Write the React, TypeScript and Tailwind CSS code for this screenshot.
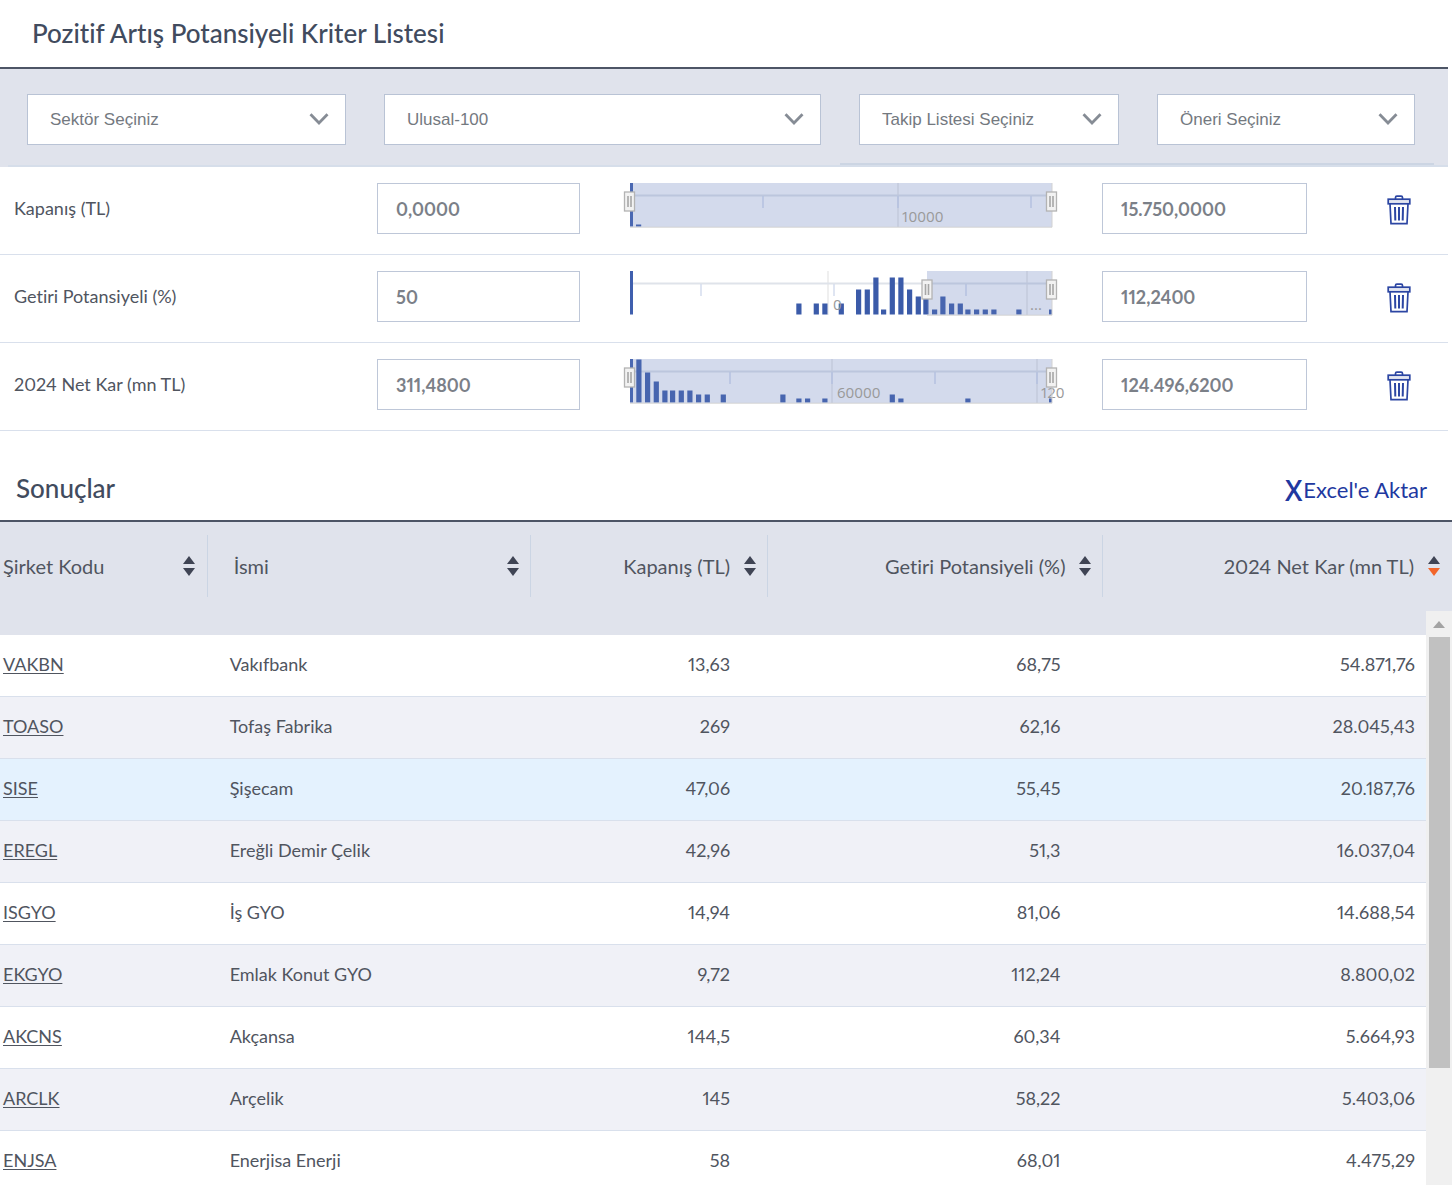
import { useState } from "react"

type Bar = [x: number, height: number]

type Criterion = {
  label: string
  min: string
  max: string
  selectionStart: number
  ticks: number[]
  majors: number[]
  captions: { x: number; text: string }[]
  bars: Bar[]
}

const filters = ["Sektör Seçiniz", "Ulusal-100", "Takip Listesi Seçiniz", "Öneri Seçiniz"]

const criteria: Criterion[] = [
  {
    label: "Kapanış (TL)",
    min: "0,0000",
    max: "15.750,0000",
    selectionStart: 10,
    ticks: [143, 278, 411],
    majors: [278],
    captions: [{ x: 282, text: "10000" }],
    bars: [[16, 2]],
  },
  {
    label: "Getiri Potansiyeli (%)",
    min: "50",
    max: "112,2400",
    selectionStart: 307,
    ticks: [81, 214, 346],
    majors: [208, 407],
    captions: [
      { x: 213, text: "0" },
      { x: 410, text: "..." },
    ],
    bars: [
      [176.3, 11], [193.7, 11], [202.3, 11], [218.7, 11], [236, 25], [244.7, 25], [253.3, 37], [261, 5],
      [269.7, 37], [278.3, 37], [287, 25], [295.7, 18], [303.3, 18], [312, 5], [320.3, 18], [329, 11],
      [337.7, 11], [345.3, 5], [354, 5], [362.7, 5], [371.3, 5], [396.3, 5], [429, 5],
    ],
  },
  {
    label: "2024 Net Kar (mn TL)",
    min: "311,4800",
    max: "124.496,6200",
    selectionStart: 10,
    ticks: [110, 212, 315, 417],
    majors: [212, 417],
    captions: [
      { x: 217, text: "60000" },
      { x: 421, text: "120" },
    ],
    bars: [
      [16.3, 43], [25, 30], [33.7, 21], [42.3, 12], [50, 12], [58.7, 12], [67.3, 12], [76, 8], [84.7, 8],
      [100.7, 8], [160.3, 8], [176.3, 4], [185, 4], [202.3, 4], [269.7, 8], [278.3, 4], [345.3, 4], [429, 4],
    ],
  },
]

const columns = [
  { label: "Şirket Kodu", className: "justify-between border-r pl-[3px] pr-3" },
  { label: "İsmi", className: "justify-between border-r pl-[26px] pr-[11px]" },
  { label: "Kapanış (TL)", className: "justify-end border-r pr-[11px]" },
  { label: "Getiri Potansiyeli (%)", className: "justify-end border-r pr-[11px]" },
  { label: "2024 Net Kar (mn TL)", className: "justify-end pr-3" },
]

const rows = [
  ["VAKBN", "Vakıfbank", "13,63", "68,75", "54.871,76"],
  ["TOASO", "Tofaş Fabrika", "269", "62,16", "28.045,43"],
  ["SISE", "Şişecam", "47,06", "55,45", "20.187,76"],
  ["EREGL", "Ereğli Demir Çelik", "42,96", "51,3", "16.037,04"],
  ["ISGYO", "İş GYO", "14,94", "81,06", "14.688,54"],
  ["EKGYO", "Emlak Konut GYO", "9,72", "112,24", "8.800,02"],
  ["AKCNS", "Akçansa", "144,5", "60,34", "5.664,93"],
  ["ARCLK", "Arçelik", "145", "58,22", "5.403,06"],
  ["ENJSA", "Enerjisa Enerji", "58", "68,01", "4.475,29"],
]

function Handle({ x }: { x: number }) {
  return (
    <g>
      <rect x={x - 5} y="9" width="10" height="19" fill="#f2f2f2" stroke="#b3b3b3" strokeWidth="1.3" />
      <path d={`M${x - 1.5} 13v11M${x + 1.5} 13v11`} stroke="#a6a6a6" strokeWidth="1.6" />
    </g>
  )
}

function RangeChart({ item }: { item: Criterion }) {
  const start = item.selectionStart
  return (
    <svg viewBox="0 0 446 51" className="block w-full overflow-visible" role="img" aria-label={item.label}>
      {item.majors.map((x) => (
        <path key={x} d={`M${x} 0v44`} stroke="#e6e6e6" strokeWidth="1.3" />
      ))}
      <path d="M13 12.5h419" stroke="#dfe3ea" strokeWidth="2" />
      {item.ticks.map((x) => (
        <path key={x} d={`M${x} 13v12`} stroke="#d5ddee" strokeWidth="1.5" />
      ))}
      <rect x="10" y="0" width="3" height="43.5" fill="#3f5fae" />
      {item.bars.map(([x, height]) => (
        <rect key={x} x={x} y={43.5 - height} width={x > 425 ? 3 : 5.2} height={height} fill="#3b5ba9" />
      ))}
      <rect x={start} y="0" width={432 - start} height="44" fill="#6680bd" fillOpacity="0.29" />
      {item.captions.map((caption) => (
        <text key={caption.text} x={caption.x} y="38.5" fontSize="15" fill="#999999" className="font-['Open_Sans',sans-serif]">
          {caption.text}
        </text>
      ))}
      <path d={`M${start} 44.2H432V0`} fill="none" stroke="#d2d2d2" strokeWidth="1" />
      <Handle x={start === 10 ? 9.5 : start} />
      <Handle x={431.5} />
    </svg>
  )
}

function TrashIcon() {
  return (
    <svg width="24" height="30" viewBox="0 0 24 30" fill="none" stroke="#2c46a3" strokeWidth="1.7" aria-hidden="true">
      <path d="M8.500 4.200V2.600q0-1.400 1.400-1.400h4.200q1.400 0 1.400 1.400v1.600" />
      <rect x="1.200" y="4.200" width="21.600" height="4.600" fill="#e3e6f0" />
      <path d="M3 8.800l1 19.900h16l1-19.900" />
      <path d="M8 12l.3 13.500M12 12v13.500M16 12l-.3 13.500" strokeWidth="2" />
    </svg>
  )
}

function SortIcon({ descending }: { descending: boolean }) {
  return (
    <svg width="12" height="20" viewBox="0 0 12 20" className="shrink-0" aria-hidden="true">
      <path d="M6 0l6 8H0z" fill="#3f4454" />
      <path d="M0 12h12l-6 8z" fill={descending ? "#f2652a" : "#3f4454"} />
    </svg>
  )
}

export default function App() {
  const [items, setItems] = useState(criteria)

  return (
    <main className="bg-white font-['Lato',sans-serif] text-[#50555f] proportional-nums [font-variant-ligatures:none]">
      {/* Criteria */}
      <section className="mr-1.5">
        <h1 className="h-[67px] pl-8 text-[26px] leading-[67px] font-medium text-[#414b5e]">
          Pozitif Artış Potansiyeli Kriter Listesi
        </h1>

        <div className="border-t-2 border-[#4d5566] bg-[#e0e3ec]">
          <div className="grid grid-cols-[319fr_437fr_260fr_258fr] gap-[38px] pt-[25px] pr-[33px] pb-[18px] pl-[27px]">
            {filters.map((filter) => (
              <div key={filter} className="relative">
                <select
                  aria-label={filter}
                  className="h-[51px] w-full appearance-none rounded-none border border-[#b9c3d5] bg-white pl-[22px] font-['Liberation_Sans',sans-serif] text-[17px] text-[#74797f]"
                >
                  <option>{filter}</option>
                </select>
                <svg
                  viewBox="0 0 20 12"
                  className="pointer-events-none absolute top-[19px] right-[17px] h-3 w-5"
                  fill="none"
                  stroke="#868c95"
                  strokeWidth="2.8"
                  aria-hidden="true"
                >
                  <path d="M1.500 1.200L10 10l8.500-8.800" />
                </svg>
              </div>
            ))}
          </div>
          <div className="mr-3.5 ml-[58%] h-[2px] bg-[#ccd5e3]" />
          <div className="ml-2 h-[2px] bg-[#d6deea]" />
        </div>

        {items.map((item) => (
          <div
            key={item.label}
            className="grid h-[88px] grid-cols-[363fr_203fr_522fr_205fr_141fr] border-b border-[#d9e0ec] pt-4 pl-3.5"
          >
            <span className="text-[18px] leading-[50px]">{item.label}</span>
            <input
              aria-label={`${item.label} min`}
              defaultValue={item.min}
              className="h-[51px] w-full border border-[#bec7d8] bg-white px-[18px] text-[18px] font-bold text-[#7b8088]"
            />
            <div className="pr-9 pl-10">
              <RangeChart item={item} />
            </div>
            <input
              aria-label={`${item.label} max`}
              defaultValue={item.max}
              className="h-[51px] w-full border border-[#bec7d8] bg-white px-[18px] text-[18px] font-bold text-[#7b8088]"
            />
            <button
              type="button"
              aria-label="Sil"
              onClick={() => setItems(items.filter((other) => other !== item))}
              className="ml-20 flex h-[54px] w-6 items-center"
            >
              <TrashIcon />
            </button>
          </div>
        ))}
      </section>

      {/* Results */}
      <section className="mr-0.5">
        <div className="flex h-[89px] items-center justify-between pt-6 pr-[25px] pl-4">
          <h2 className="text-[26px] leading-8 font-medium text-[#414b5e]">Sonuçlar</h2>
          <a href="#excel" className="flex items-center gap-px pt-1 text-[22px] leading-8 text-[#2138a0]">
            <span className="font-['Open_Sans',sans-serif] text-[28px] font-semibold">X</span>
            Excel'e Aktar
          </a>
        </div>

        <div className="relative max-h-[665px] overflow-hidden border-t-2 border-[#4d5566]">
          <table className="w-full table-fixed border-separate border-spacing-0">
            <colgroup>
              <col className="w-[14.3%]" />
              <col className="w-[22.3%]" />
              <col className="w-[16.3%]" />
              <col className="w-[23.1%]" />
              <col className="w-[24%]" />
            </colgroup>
            <thead>
              <tr className="h-[113px] bg-[#e0e3ec]">
                {columns.map((column, index) => (
                  <th key={column.label} className="p-0 pt-[13px] align-top text-[20px] font-normal">
                    <div className={`flex h-[62px] items-center gap-3.5 border-[#cbd5e4] ${column.className}`}>
                      {column.label}
                      <SortIcon descending={index === 4} />
                    </div>
                  </th>
                ))}
              </tr>
            </thead>
            <tbody className="text-[18px] leading-6">
              {rows.map(([code, name, close, potential, profit]) => (
                <tr
                  key={code}
                  className={`h-[62px] *:border-b *:border-[#d9e0ec] *:pt-0 *:pb-1 ${
                    code === "SISE" ? "bg-[#e4f2fe]" : "even:bg-[#f0f1f7]"
                  }`}
                >
                  <td className="pl-[3px]">
                    <a href={`#${code}`} className="underline underline-offset-2">
                      {code}
                    </a>
                  </td>
                  <td className="pl-[22px]">{name}</td>
                  <td className="pr-[38px] text-right">{close}</td>
                  <td className="pr-[43px] text-right">{potential}</td>
                  <td className="pr-[37px] text-right">{profit}</td>
                </tr>
              ))}
            </tbody>
          </table>

          {/* Scrollbar */}
          <div className="absolute top-[89px] right-0 bottom-0 flex w-[26px] flex-col items-center bg-[#f0f0f0]">
            <svg width="12" height="7" viewBox="0 0 12 7" className="mt-[10px] mb-[9px] shrink-0" aria-hidden="true">
              <path d="M6 0l6 7H0z" fill="#a3a3a3" />
            </svg>
            <div className="h-[431px] w-[21px] shrink-0 bg-[#c1c1c1]" />
          </div>
        </div>
      </section>
    </main>
  )
}
